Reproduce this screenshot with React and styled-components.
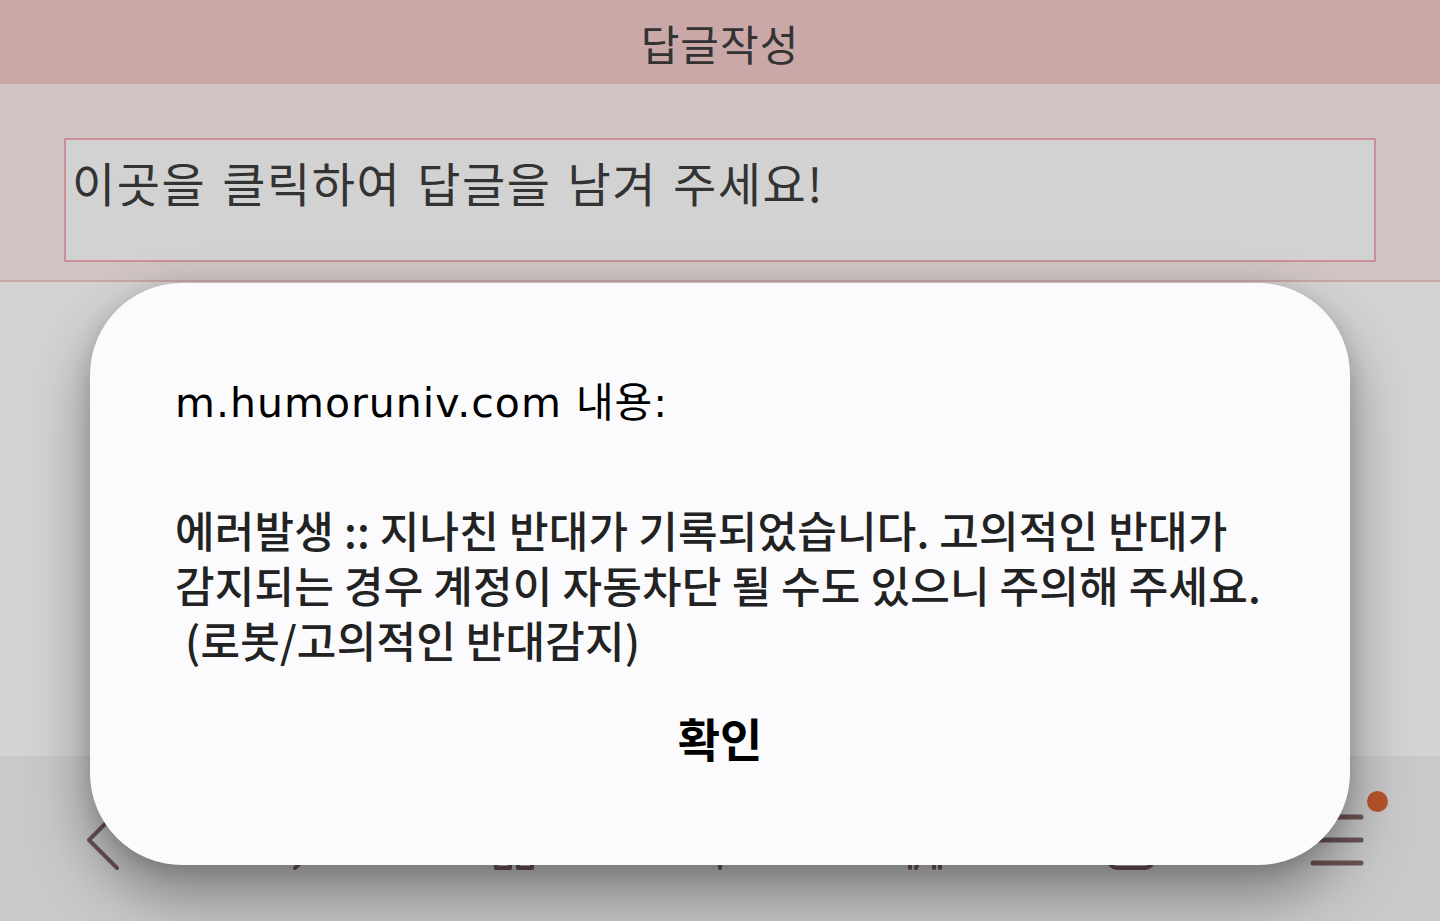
import styled, { createGlobalStyle } from 'styled-components';

const GlobalStyle = createGlobalStyle`
   html, body {
      margin: 0;
      padding: 0;
      height: 100%;
      overflow: hidden;
   }
   #root {
      height: 100%;
   }
   body {
      font-family: "Noto Sans CJK KR", "Noto Sans", sans-serif;
   }
`;

const navIcons = [
   { id: 'back' },
   { id: 'forward' },
   { id: 'home' },
   { id: 'star' },
   { id: 'tabs' },
   { id: 'window' },
   { id: 'menu' },
];

const messageLines = [
   '에러발생 :: 지나친 반대가 기록되었습니다. 고의적인 반대가',
   '감지되는 경우 계정이 자동차단 될 수도 있으니 주의해 주세요.',
   '\u00a0(로봇/고의적인 반대감지)',
];

function NavIcon({ id }) {
   const stroke = '#6e5456';
   const common = {
      fill: 'none',
      stroke,
      strokeWidth: 4,
      strokeLinecap: 'round',
      strokeLinejoin: 'round',
   };
   switch (id) {
      case 'back':
         return (
            <svg width="60" height="70" viewBox="0 0 60 70">
               <path d="M44 8 L16 36 L44 64" {...common} />
            </svg>
         );
      case 'forward':
         return (
            <svg width="60" height="70" viewBox="0 0 60 70">
               <path d="M16 8 L44 36 L16 64" {...common} />
            </svg>
         );
      case 'home':
         return (
            <svg width="60" height="70" viewBox="0 0 60 70">
               <path d="M8 30 L30 10 L52 30 M12 27 V64 H26 V48 H34 V64 H48 V27" {...common} />
            </svg>
         );
      case 'star':
         return (
            <svg width="60" height="70" viewBox="0 0 60 70">
               <path d="M30 8 V64 M8 36 H52" {...common} />
            </svg>
         );
      case 'tabs':
         return (
            <svg width="60" height="70" viewBox="0 0 60 70">
               <path d="M14 10 L14 64 M28 40 L20 64 M38 44 V64 M44 20 V64" {...common} />
            </svg>
         );
      case 'window':
         return (
            <svg width="60" height="70" viewBox="0 0 60 70">
               <rect x="8" y="14" width="44" height="50" rx="8" {...common} />
            </svg>
         );
      default:
         return (
            <svg width="60" height="70" viewBox="0 0 60 70">
               <path d="M6 13 H54 M6 36 H54 M6 59 H54" {...common} strokeWidth="5" />
            </svg>
         );
   }
}

function App() {
   return (
      <Page>
         <GlobalStyle />
         <Header>
            <Title>답글작성</Title>
         </Header>
         <ReplyArea>
            <ReplyBox placeholder="이곳을 클릭하여 답글을 남겨 주세요!" />
         </ReplyArea>
         <Body />
         <BottomNav>
            {navIcons.map((item) => (
               <NavSlot key={item.id}>
                  <NavIcon id={item.id} />
                  {item.id === 'menu' && <Badge />}
               </NavSlot>
            ))}
         </BottomNav>

         <Dialog role="alertdialog">
            <DialogTitle>m.humoruniv.com 내용:</DialogTitle>
            <DialogMessage>
               {messageLines.map((line) => (
                  <MessageLine key={line}>{line}</MessageLine>
               ))}
            </DialogMessage>
            <DialogButton>확인</DialogButton>
         </Dialog>
      </Page>
   );
}

const Page = styled.div`
   position: relative;
   width: 1440px;
   height: 921px;
   display: flex;
   flex-direction: column;
   background: #d3d3d3;
   overflow: hidden;
`;

const Header = styled.header`
   height: 84px;
   flex-shrink: 0;
   background: #caa8a8;
   display: flex;
   align-items: center;
   justify-content: center;
`;

const Title = styled.h1`
   margin: 0;
   font-size: 42px;
   font-weight: 400;
   color: #333;
   letter-spacing: 1px;
`;

const ReplyArea = styled.section`
   height: 198px;
   flex-shrink: 0;
   box-sizing: border-box;
   background: #d0c4c4;
   border-bottom: 2px solid #c9a6a7;
   padding: 54px 64px 0;
`;

const ReplyBox = styled.textarea`
   display: block;
   width: 100%;
   height: 124px;
   box-sizing: border-box;
   margin: 0;
   border: 2px solid #c99195;
   background: #d2d2d2;
   padding: 0 6px;
   resize: none;
   font-family: "Noto Sans CJK KR", sans-serif;
   font-size: 47px;
   line-height: 1.8;
   letter-spacing: 1.5px;
   word-spacing: 4px;
   color: #333;
   outline: none;

   &::placeholder {
      color: #333;
      opacity: 1;
   }
`;

const Body = styled.div`
   flex: 1;
`;

const BottomNav = styled.nav`
   height: 165px;
   flex-shrink: 0;
   background: #c9c9c9;
   display: grid;
   grid-template-columns: repeat(7, 1fr);
   align-items: start;
   padding: 48px 0 0 0;
   box-sizing: border-box;
`;

const NavSlot = styled.div`
   position: relative;
   display: flex;
   justify-content: center;
`;

const Badge = styled.span`
   position: absolute;
   top: -13px;
   left: calc(50% + 30px);
   width: 21px;
   height: 21px;
   border-radius: 50%;
   background: #b8562a;
`;

const Dialog = styled.div`
   position: absolute;
   top: 283px;
   left: 90px;
   width: 1260px;
   height: 582px;
   box-sizing: border-box;
   padding: 96px 85px 0;
   background: #fbfbfd;
   border-radius: 92px;
   box-shadow: 0 30px 60px rgba(0, 0, 0, 0.38), 0 4px 20px rgba(0, 0, 0, 0.12);
   display: flex;
   flex-direction: column;
`;

const DialogTitle = styled.h2`
   margin: 0;
   font-family: "DejaVu Sans", "Noto Sans CJK KR", sans-serif;
   font-size: 41px;
   line-height: 48px;
   font-weight: 400;
   color: #000;
   letter-spacing: 1px;
`;

const DialogMessage = styled.div`
   margin: 75px 0 0;
   display: flex;
   flex-direction: column;
`;

const MessageLine = styled.p`
   margin: 0;
   height: 55px;
   display: flex;
   align-items: center;
   font-family: "Noto Sans CJK KR", sans-serif;
   font-size: 43px;
   line-height: 1;
   font-weight: 500;
   color: #222;
   letter-spacing: 0.2px;
   white-space: nowrap;
`;

const DialogButton = styled.button`
   align-self: center;
   margin-top: 40px;
   border: none;
   background: none;
   padding: 0;
   font-family: "Noto Sans CJK KR", sans-serif;
   font-size: 46px;
   line-height: 60px;
   font-weight: 700;
   color: #000;
   cursor: pointer;
`;

export default App;
